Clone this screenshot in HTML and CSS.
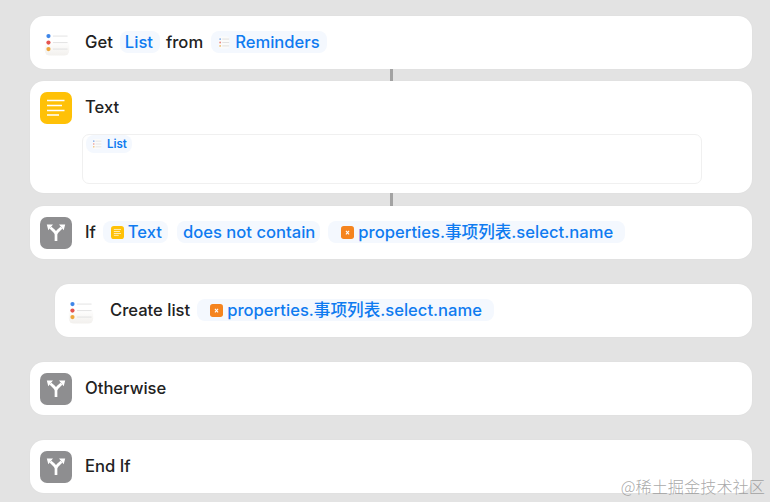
FILE: index.html
```html
<!DOCTYPE html>
<html lang="zh">
<head>
<meta charset="utf-8">
<title>Shortcut</title>
<link rel="stylesheet" href="styles.css">
</head>
<body>
<svg class="defs" width="0" height="0" aria-hidden="true">
  <defs>
    <linearGradient id="tile" x1="0" y1="0" x2="0" y2="1">
      <stop offset="0.4" stop-color="#ffffff"/>
      <stop offset="1" stop-color="#f2f0ed"/>
    </linearGradient>
    <symbol id="branch" viewBox="0 0 32 32">
      <path d="M16 24V17.500C16 15 14 14 10.500 10.800M16 17.500C16 15 18 14 21.500 10.800" fill="none" stroke="#fff" stroke-width="2.700"/>
      <path d="M6.800 7.500L13 7.500L8.300 13.300ZM25.200 7.500L19 7.500L23.700 13.300Z" fill="#fff"/>
    </symbol>
    <symbol id="reminders" viewBox="0 0 32 32">
      <rect x="1" y="1" width="30" height="28" rx="6" fill="url(#tile)"/>
      <circle cx="5.500" cy="5" r="2.600" fill="#3f86e8"/>
      <circle cx="5.500" cy="13" r="2.600" fill="#e5544f"/>
      <circle cx="5.500" cy="21" r="2.600" fill="#eda63c"/>
      <path d="M11 5H29M11 13H29M11 21H29" stroke="#dedede" stroke-width="1"/>
    </symbol>
    <symbol id="reminders-mini" viewBox="0 0 14 14">
      <rect x="1" y="0" width="12" height="14" rx="2" fill="#fbfbfa"/>
      <circle cx="2.500" cy="3" r="1.100" fill="#7da9e8"/>
      <circle cx="2.500" cy="7" r="1.100" fill="#e98d88"/>
      <circle cx="2.500" cy="11" r="1.100" fill="#edbd74"/>
      <path d="M5 3H13M5 7H13M5 11H13" stroke="#dcdcdc" stroke-width="1"/>
    </symbol>
    <symbol id="lines" viewBox="0 0 32 32">
      <rect width="32" height="32" rx="7" fill="#ffc107"/>
      <path d="M7 8.500H24.500M7 13.500H22M7 18.500H24.500M7 23H19" stroke="#fff" stroke-width="1.700"/>
    </symbol>
    <symbol id="var" viewBox="0 0 14 14">
      <rect width="14" height="14" rx="3" fill="#f5841f"/>
      <path d="M5.300 5.300L8.700 9M8.700 5.300L5.300 9" stroke="#fff" stroke-width="1.100"/>
    </symbol>
  </defs>
</svg>
<main class="flow">
  <section class="card row">
    <svg class="icon icon-rem"><use href="#reminders"/></svg>
    <span class="label">Get</span>
    <span class="token plain-token list-token">List</span>
    <span class="label from">from</span>
    <span class="token source-token"><svg class="mini"><use href="#reminders-mini"/></svg>Reminders</span>
  </section>
  <div class="link"></div>
  <section class="card text-card">
    <div class="row text-head">
      <svg class="icon"><use href="#lines"/></svg>
      <span class="label">Text</span>
    </div>
    <div class="text-box">
      <span class="token small-token"><svg class="mini mini-small"><use href="#reminders-mini"/></svg>List</span>
    </div>
  </section>
  <div class="link link-b"></div>
  <section class="card row">
    <svg class="icon icon-branch"><use href="#branch"/></svg>
    <span class="label">If</span>
    <span class="token text-token"><svg class="mini"><use href="#lines"/></svg>Text</span>
    <span class="token plain-token cond-token">does not contain</span>
    <span class="token var-token"><svg class="mini"><use href="#var"/></svg>properties.事项列表.select.name</span>
  </section>
  <section class="card row nested spaced">
    <svg class="icon icon-rem"><use href="#reminders"/></svg>
    <span class="label">Create list</span>
    <span class="token var-token"><svg class="mini"><use href="#var"/></svg>properties.事项列表.select.name</span>
  </section>
  <section class="card row spaced">
    <svg class="icon icon-branch"><use href="#branch"/></svg>
    <span class="label">Otherwise</span>
  </section>
  <section class="card row spaced">
    <svg class="icon icon-branch"><use href="#branch"/></svg>
    <span class="label">End If</span>
  </section>
</main>
<div class="mark">@稀土掘金技术社区</div>
</body>
</html>
```
FILE: styles.css
```css
* { box-sizing: border-box; }
html, body { margin: 0; height: 100%; }
body {
  width: 770px;
  height: 502px;
  overflow: hidden;
  position: relative;
  background: #e3e3e3;
  font-family: Inter, "Noto Sans CJK SC", sans-serif;
  font-weight: 500;
  font-size: 16.6px;
  line-height: 20px;
  color: #222;
}
.defs { position: absolute; }
.flow {
  display: flex;
  flex-direction: column;
  padding: 16px 18px 0 30px;
}
.card {
  background: #fff;
  border-radius: 14px;
  box-shadow: 0 0 2px rgba(0, 0, 0, 0.04);
}
.row {
  display: flex;
  align-items: center;
  height: 53px;
  padding: 0 0 1px 10px;
}
.nested { margin-left: 25px; }
.spaced { margin-top: 25px; }
.link {
  width: 3px;
  height: 12px;
  margin-left: 360px;
  background: #a3a3a3;
}
.link-b { height: 13px; }
.icon {
  width: 32px;
  height: 32px;
  flex: none;
  margin: 2px 13px 0 0;
}
.icon-branch {
  background: #8e8e90;
  border-radius: 7px;
}
.icon-rem {
  width: 26px;
  height: 26px;
  margin: 6px 15px 0 4px;
}
.nested .icon-rem { margin: 6px 16px 0 3px; }
.label { white-space: nowrap; }
.from { margin-left: 6px; }
.token {
  display: inline-flex;
  align-items: center;
  gap: 4px;
  height: 22px;
  margin-left: 7px;
  padding: 0 7px 0 8px;
  border-radius: 8px;
  background: #f4f8fe;
  color: #0f7bf0;
  white-space: nowrap;
}
.plain-token { padding: 0 6px; }
.list-token { padding: 0 7px 0 5px; }
.source-token { margin-left: 8px; padding-left: 7px; gap: 5px; }
.source-token .mini { width: 12px; }
.text-token { margin-left: 7px; padding-right: 6px; }
.cond-token { margin-left: 9px; padding-right: 5px; }
.var-token { margin-left: 7px; padding: 0 12px 0 13px; }
.cond-token + .var-token { margin-left: 8px; }
.mini {
  width: 13px;
  height: 13px;
  flex: none;
}
.text-card {
  height: 112px;
  display: flex;
  flex-direction: column;
}
.text-head { flex: none; }
.text-box {
  display: flex;
  align-items: flex-start;
  width: 620px;
  height: 50px;
  margin-left: 52px;
  border: 1px solid #f0f0f0;
  border-radius: 7px;
}
.small-token {
  height: 18px;
  margin: 0 0 0 3px;
  padding: 0 5px 0 6px;
  font-size: 11.500px;
  font-weight: 600;
  gap: 5px;
}
.mini-small { width: 10px; height: 10px; }
.mark {
  position: absolute;
  right: 5px;
  bottom: 4px;
  font-size: 16.200px;
  line-height: 24px;
  font-weight: 300;
  color: rgba(140, 140, 140, 0.75);
  font-family: "Noto Sans CJK SC", sans-serif;
}
```
